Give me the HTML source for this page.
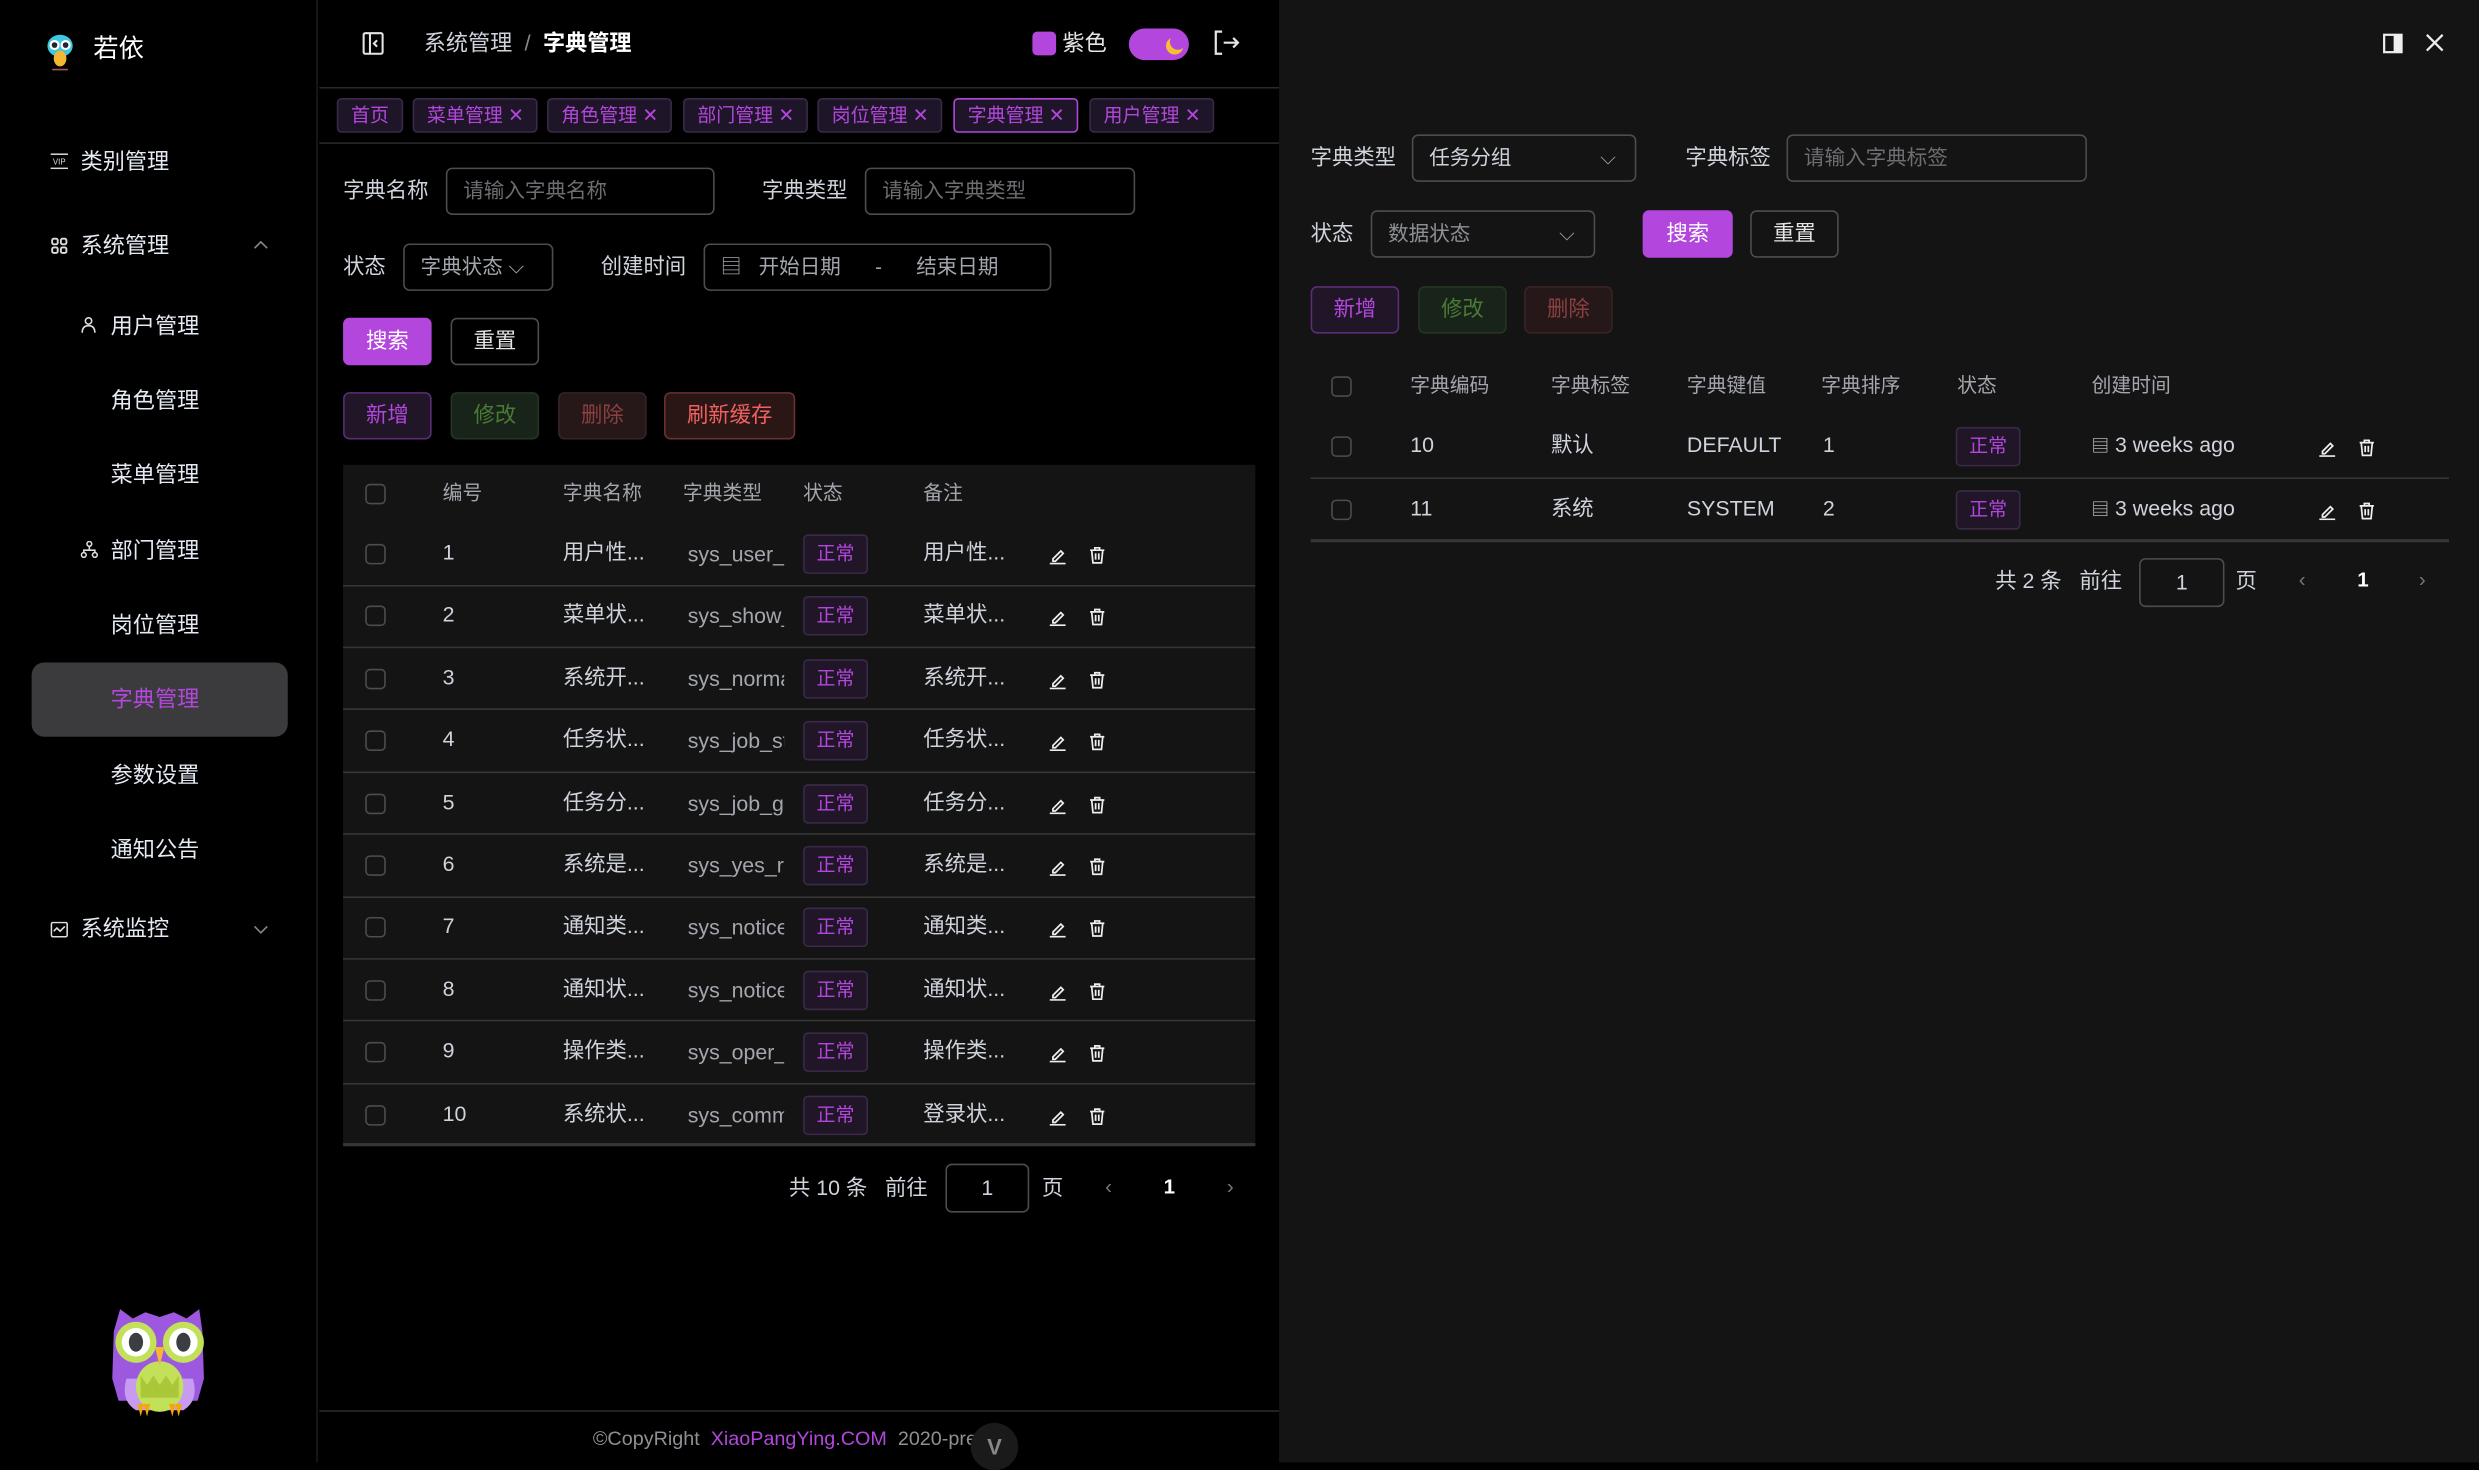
<!DOCTYPE html>
<html><head><meta charset="utf-8">
<style>
*{box-sizing:border-box;margin:0;padding:0}
html,body{width:2479px;height:1463px;overflow:hidden;background:#000}
#w{position:absolute;left:0;top:0;width:1568px;height:925px;transform:scale(1.581);transform-origin:0 0;font-family:"Liberation Sans","Noto Sans CJK SC",sans-serif;font-size:13px;line-height:18px;color:#cfd3dc}
.a{position:absolute;white-space:nowrap}
.side{left:0;top:0;width:201px;height:925px;background:#000;border-right:1px solid #1f1f1f;border-radius:8px 0 0 8px}
.mi{font-size:14px;color:#e5eaf3}
.inp{border:1px solid #4c4d4f;border-radius:4px;height:30px;color:#6c6e72;font-size:13px;line-height:28px;padding-left:10px}
.lbl{font-size:13.5px;color:#cfd3dc}
.btn{border-radius:4px;height:30px;line-height:28px;text-align:center;font-size:13.5px;border:1px solid}
.tag{height:22px;line-height:20px;border-radius:3px;border:1px solid #3a2a48;background:#1e1528;color:#b347dd;font-size:12px;padding:0 8px}
.st{width:41px;height:25px;line-height:23px;text-align:center;border-radius:3px;border:1px solid #3a2a48;background:#211628;color:#b347dd;font-size:12px}
.cb{width:13px;height:13px;border:1px solid #4c4d4f;border-radius:3px}
.th{color:#a3a6ad;font-size:12.5px}
.td{color:#cfd3dc;font-size:13.5px}
.line{height:1px;background:#363637}
</style></head><body><div id="w">
<div class="a side"></div>
<svg class="a" style="left:28px;top:20px" width="20" height="26" viewBox="0 0 20 26"><ellipse cx="10" cy="9" rx="8" ry="7" fill="#3ec9e0"/><circle cx="6.5" cy="8.5" r="3.2" fill="#fff"/><circle cx="13.5" cy="8.5" r="3.2" fill="#fff"/><circle cx="6.5" cy="8.5" r="1.8" fill="#223"/><circle cx="13.5" cy="8.5" r="1.8" fill="#223"/><ellipse cx="10" cy="17" rx="4" ry="5" fill="#f5b630"/><path d="M5 24h10" stroke="#a55" stroke-width="1"/></svg>
<div class="a" style="left:59px;top:22px;font-size:16px;color:#fff;line-height:20px">若依</div>
<svg class="a" style="left:32px;top:97px" width="11" height="10" viewBox="0 0 11 10"><rect x="0" y="0" width="11" height="1" fill="#ddd"/><text x="5.5" y="7" font-size="5" fill="#ddd" text-anchor="middle" font-family="Liberation Sans">VIP</text><rect x="0" y="9" width="11" height="1" fill="#ddd"/></svg>
<div class="a mi" style="left:51px;top:93px">类别管理</div>
<svg class="a" style="left:32px;top:150px" width="11" height="11" viewBox="0 0 11 11" fill="none" stroke="#ddd" stroke-width="1.2"><rect x="1" y="1" width="3.5" height="3.5" rx="1"/><rect x="6.5" y="1" width="3.5" height="3.5" rx="1"/><rect x="1" y="6.5" width="3.5" height="3.5" rx="1"/><rect x="6.5" y="6.5" width="3.5" height="3.5" rx="1"/></svg>
<div class="a mi" style="left:51px;top:146px">系统管理</div>
<svg class="a" style="left:160px;top:152px" width="10" height="6" viewBox="0 0 10 6"><path d="M1 5l4-4 4 4" stroke="#888" fill="none"/></svg>
<svg class="a" style="left:51px;top:200px" width="10" height="11" viewBox="0 0 10 11" fill="none" stroke="#ddd"><circle cx="5" cy="3" r="2"/><path d="M1 10.5c0-3 1.5-4.5 4-4.5s4 1.5 4 4.5"/></svg>
<div class="a mi" style="left:70px;top:197px">用户管理</div>
<div class="a mi" style="left:70px;top:244px">角色管理</div>
<div class="a mi" style="left:70px;top:291px">菜单管理</div>
<svg class="a" style="left:51px;top:342px" width="11" height="11" viewBox="0 0 11 11" fill="none" stroke="#ddd"><circle cx="5.5" cy="2" r="1.5"/><circle cx="2" cy="9" r="1.5"/><circle cx="9" cy="9" r="1.5"/><path d="M5.5 3.5v2.5M2 7.5V6h7v1.5"/></svg>
<div class="a mi" style="left:70px;top:339px">部门管理</div>
<div class="a mi" style="left:70px;top:386px">岗位管理</div>
<div class="a" style="left:20px;top:419px;width:162px;height:47px;background:#3b3b3d;border-radius:8px"></div>
<div class="a mi" style="left:70px;top:433px;color:#b347dd">字典管理</div>
<div class="a mi" style="left:70px;top:481px">参数设置</div>
<div class="a mi" style="left:70px;top:528px">通知公告</div>
<svg class="a" style="left:32px;top:583px" width="11" height="10" viewBox="0 0 11 10" fill="none" stroke="#ddd"><rect x="0.5" y="0.5" width="10" height="9" rx="1"/><path d="M2 6l2-2 2 2 3-3"/></svg>
<div class="a mi" style="left:51px;top:578px">系统监控</div>
<svg class="a" style="left:160px;top:585px" width="10" height="6" viewBox="0 0 10 6"><path d="M1 1l4 4 4-4" stroke="#888" fill="none"/></svg>
<!-- owl -->
<svg class="a" style="left:62px;top:822px" width="78" height="76" viewBox="0 0 78 76"><path d="M14 6l8 6 8-4 9 3 9-3 8 4 8-6 2 14 1 30-4 14-50 0-4-14 1-30z" fill="#9d58e0"/><path d="M18 50q-4 14 6 20h30q10-6 6-20z" fill="#c79bf0"/><ellipse cx="39" cy="55" rx="15" ry="16" fill="#c3e05a"/><path d="M27 48l4 6 4-6 4 6 4-6 4 6 4-6v14H27z" fill="#9fbb2b" opacity=".7"/><circle cx="24" cy="27" r="13" fill="#c3e05a"/><circle cx="54" cy="27" r="13" fill="#c3e05a"/><circle cx="24" cy="27" r="9" fill="#fff"/><circle cx="54" cy="27" r="9" fill="#fff"/><ellipse cx="24" cy="27" rx="4.5" ry="6" fill="#3a3d42"/><ellipse cx="54" cy="27" rx="4.5" ry="6" fill="#3a3d42"/><path d="M36 30h6l-3 12z" fill="#f5b630"/><path d="M25 66l2 8 2-8 2 8 2-8zM45 66l2 8 2-8 2 8 2-8z" fill="#f5a800"/></svg>
<!-- main header -->
<div class="a" style="left:202px;top:55px;width:607px"><div class="line" style="background:#2a2a2a"></div></div>
<div class="a" style="left:202px;top:90px;width:607px"><div class="line" style="background:#2a2a2a"></div></div>
<svg class="a" style="left:229px;top:20px" width="14" height="15" viewBox="0 0 14 15" fill="none" stroke="#e5e5e5" stroke-width="1.3"><rect x="1" y="1" width="12" height="13" rx="1"/><path d="M5 1v13M9.5 5.5l-2 2 2 2"/></svg>
<div class="a" style="left:268px;top:18px;font-size:14px;color:#cfd3dc">系统管理 &nbsp;<span style="color:#888">/</span>&nbsp; <b style="color:#fff">字典管理</b></div>
<div class="a" style="left:653px;top:20px;width:15px;height:15px;border-radius:3px;background:#b347dd"></div>
<div class="a" style="left:672px;top:18px;font-size:14px;color:#e5e5e5">紫色</div>
<div class="a" style="left:714px;top:18px;width:38px;height:20px;border-radius:10px;background:#b347dd"></div>
<svg class="a" style="left:735px;top:20px" width="16" height="16" viewBox="0 0 16 16"><circle cx="8" cy="9" r="5.5" fill="#f5c033"/><circle cx="10" cy="6.5" r="5" fill="#b347dd"/></svg>
<svg class="a" style="left:767px;top:19px" width="17" height="16" viewBox="0 0 17 16" fill="none" stroke="#e5e5e5" stroke-width="1.4"><path d="M6 1H2v14h4M7 8h9M13 5l3 3-3 3"/></svg>
<!-- tags -->
<div class="a tag" style="left:213px;top:62px">首页</div>
<div class="a tag" style="left:261px;top:62px">菜单管理 ✕</div>
<div class="a tag" style="left:346px;top:62px">角色管理 ✕</div>
<div class="a tag" style="left:432px;top:62px">部门管理 ✕</div>
<div class="a tag" style="left:517px;top:62px">岗位管理 ✕</div>
<div class="a tag" style="left:603px;top:62px;border-color:#b347dd">字典管理 ✕</div>
<div class="a tag" style="left:689px;top:62px">用户管理 ✕</div>
<!-- form -->
<div class="a lbl" style="left:217px;top:112px">字典名称</div>
<div class="a inp" style="left:282px;top:106px;width:170px">请输入字典名称</div>
<div class="a lbl" style="left:482px;top:112px">字典类型</div>
<div class="a inp" style="left:547px;top:106px;width:171px">请输入字典类型</div>
<div class="a lbl" style="left:217px;top:160px">状态</div>
<div class="a inp" style="left:255px;top:154px;width:95px;color:#a3a6ad">字典状态 ⌵</div>
<div class="a lbl" style="left:380px;top:160px">创建时间</div>
<div class="a inp" style="left:445px;top:154px;width:220px;color:#a3a6ad">▤ &nbsp; 开始日期 &nbsp;&nbsp;&nbsp;&nbsp; - &nbsp;&nbsp;&nbsp;&nbsp; 结束日期</div>
<div class="a btn" style="left:217px;top:201px;width:56px;background:#b347dd;border-color:#b347dd;color:#fff">搜索</div>
<div class="a btn" style="left:285px;top:201px;width:56px;border-color:#4c4d4f;color:#e5e5e5">重置</div>
<div class="a btn" style="left:217px;top:248px;width:56px;background:#211628;border-color:#5b2d78;color:#b347dd">新增</div>
<div class="a btn" style="left:285px;top:248px;width:56px;background:#18241a;border-color:#23361f;color:#4b7a35">修改</div>
<div class="a btn" style="left:353px;top:248px;width:56px;background:#261818;border-color:#3a2323;color:#8a4040">删除</div>
<div class="a btn" style="left:420px;top:248px;width:83px;background:#2b1616;border-color:#6a3030;color:#f06060">刷新缓存</div>
<!-- left table -->
<div class="a" style="left:217px;top:294px;width:577px;height:431px;background:#141414"></div>
<div class="a" style="left:217px;top:723px;width:577px;height:2px;background:#363637"></div>
<div class="a cb" style="left:231px;top:306px"></div>
<div class="a th" style="left:280px;top:303px">编号</div><div class="a th" style="left:356px;top:303px">字典名称</div><div class="a th" style="left:432px;top:303px">字典类型</div><div class="a th" style="left:508px;top:303px">状态</div><div class="a th" style="left:584px;top:303px">备注</div>
<div id="lrows"></div>
<div class="a td" style="left:499px;top:743px">共 10 条 &nbsp; 前往</div>
<div class="a" style="left:598px;top:736px;width:53px;height:31px;border:1px solid #4c4d4f;border-radius:4px;text-align:center;line-height:29px;font-size:13.5px">1</div>
<div class="a td" style="left:659px;top:743px">页</div>
<div class="a" style="left:699px;top:742px;color:#777">‹</div>
<div class="a" style="left:736px;top:742px;color:#fff;font-weight:bold">1</div>
<div class="a" style="left:776px;top:742px;color:#777">›</div>
<!-- footer -->
<div class="a" style="left:202px;top:892px;width:607px"><div class="line" style="background:#2a2a2a"></div></div>
<div class="a" style="left:375px;top:901px;font-size:12.5px;color:#8d9095">©CopyRight &nbsp;<span style="color:#b347dd">XiaoPangYing.COM</span> &nbsp;2020-pres</div>
<div class="a" style="left:614px;top:900px;width:30px;height:30px;border-radius:15px;background:#1a1a1a;color:#888;text-align:center;font-weight:bold;font-size:14px;line-height:30px">V</div>
<!-- right panel -->
<div class="a" style="left:809px;top:0;width:759px;height:925px;background:#141414"></div>
<svg class="a" style="left:1507px;top:21px" width="13" height="13" viewBox="0 0 13 13"><rect x="1" y="1" width="11" height="11" fill="none" stroke="#eee" stroke-width="1.4"/><rect x="7" y="1" width="5" height="11" fill="#eee"/></svg>
<svg class="a" style="left:1534px;top:21px" width="12" height="12" viewBox="0 0 12 12"><path d="M1 1l10 10M11 1L1 11" stroke="#eee" stroke-width="1.4"/></svg>
<div class="a lbl" style="left:829px;top:91px">字典类型</div>
<div class="a inp" style="left:893px;top:85px;width:142px;color:#cfd3dc">任务分组<span style="position:absolute;right:12px;color:#999">⌵</span></div>
<div class="a lbl" style="left:1066px;top:91px">字典标签</div>
<div class="a inp" style="left:1130px;top:85px;width:190px">请输入字典标签</div>
<div class="a lbl" style="left:829px;top:139px">状态</div>
<div class="a inp" style="left:867px;top:133px;width:142px;color:#8d9095">数据状态<span style="position:absolute;right:12px;color:#999">⌵</span></div>
<div class="a btn" style="left:1039px;top:133px;width:57px;background:#b347dd;border-color:#b347dd;color:#fff">搜索</div>
<div class="a btn" style="left:1107px;top:133px;width:56px;border-color:#4c4d4f;color:#e5e5e5">重置</div>
<div class="a btn" style="left:829px;top:181px;width:56px;background:#211628;border-color:#5b2d78;color:#b347dd">新增</div>
<div class="a btn" style="left:897px;top:181px;width:56px;background:#18241a;border-color:#23361f;color:#4b7a35">修改</div>
<div class="a btn" style="left:964px;top:181px;width:56px;background:#261818;border-color:#3a2323;color:#8a4040">删除</div>
<div class="a cb" style="left:842px;top:238px"></div>
<div class="a th" style="left:892px;top:235px">字典编码</div><div class="a th" style="left:981px;top:235px">字典标签</div><div class="a th" style="left:1067px;top:235px">字典键值</div><div class="a th" style="left:1152px;top:235px">字典排序</div><div class="a th" style="left:1238px;top:235px">状态</div><div class="a th" style="left:1323px;top:235px">创建时间</div>
<div id="rrows"></div>
<div class="a td" style="left:1262px;top:359px">共 2 条 &nbsp; 前往</div>
<div class="a" style="left:1353px;top:353px;width:54px;height:31px;border:1px solid #4c4d4f;border-radius:4px;text-align:center;line-height:29px;font-size:13.5px">1</div>
<div class="a td" style="left:1414px;top:359px">页</div>
<div class="a" style="left:1454px;top:358px;color:#777">‹</div>
<div class="a" style="left:1491px;top:358px;color:#fff;font-weight:bold">1</div>
<div class="a" style="left:1530px;top:358px;color:#777">›</div>
</div>
<script>
var ed='<svg width="12" height="12" viewBox="0 0 12 12" fill="none" stroke="#eee" stroke-width="1.1"><path d="M3 8.5l5-5 1.5 1.5-5 5H3z"/><path d="M1 11.5h10"/></svg>';
var tr='<svg width="12" height="12" viewBox="0 0 12 12" fill="none" stroke="#eee" stroke-width="1.1"><path d="M1.5 3h9M4.5 3V1.5h3V3M2.5 3l.8 8h5.4l.8-8M5 5v4M7 5v4"/></svg>';
var L=[["1","用户性...","sys_user_","用户性..."],["2","菜单状...","sys_show_","菜单状..."],["3","系统开...","sys_norma","系统开..."],["4","任务状...","sys_job_st","任务状..."],["5","任务分...","sys_job_g","任务分..."],["6","系统是...","sys_yes_r","系统是..."],["7","通知类...","sys_notice","通知类..."],["8","通知状...","sys_notice","通知状..."],["9","操作类...","sys_oper_","操作类..."],["10","系统状...","sys_comm","登录状..."]];
var h='';
L.forEach(function(r,i){var c=350+i*39.4;
h+='<div class="a cb" style="left:231px;top:'+(c-6)+'px"></div>';
h+='<div class="a td" style="left:280px;top:'+(c-9)+'px">'+r[0]+'</div>';
h+='<div class="a td" style="left:356px;top:'+(c-9)+'px">'+r[1]+'</div>';
h+='<div class="a td" style="left:435px;top:'+(c-8)+'px;width:61px;overflow:hidden;color:#a3a6ad">'+r[2]+'</div>';
h+='<div class="a st" style="left:508px;top:'+(c-12)+'px">正常</div>';
h+='<div class="a td" style="left:584px;top:'+(c-9)+'px">'+r[3]+'</div>';
h+='<div class="a" style="left:663px;top:'+(c-6)+'px">'+ed+'</div><div class="a" style="left:688px;top:'+(c-6)+'px">'+tr+'</div>';
if(i<9)h+='<div class="a line" style="left:217px;width:577px;top:'+(c+19.5)+'px"></div>';});
document.getElementById('lrows').outerHTML=h;
var R=[["10","默认","DEFAULT","1"],["11","系统","SYSTEM","2"]];h='';
R.forEach(function(r,i){var c=282+i*39.5;
h+='<div class="a cb" style="left:842px;top:'+(c-6)+'px"></div>';
h+='<div class="a td" style="left:892px;top:'+(c-9)+'px">'+r[0]+'</div>';
h+='<div class="a td" style="left:981px;top:'+(c-9)+'px">'+r[1]+'</div>';
h+='<div class="a td" style="left:1067px;top:'+(c-9)+'px">'+r[2]+'</div>';
h+='<div class="a td" style="left:1153px;top:'+(c-9)+'px">'+r[3]+'</div>';
h+='<div class="a st" style="left:1237px;top:'+(c-12)+'px">正常</div>';
h+='<div class="a td" style="left:1323px;top:'+(c-9)+'px"><span style="font-size:11px">▤</span> 3 weeks ago</div>';
h+='<div class="a" style="left:1466px;top:'+(c-6)+'px">'+ed+'</div><div class="a" style="left:1491px;top:'+(c-6)+'px">'+tr+'</div>';
h+='<div class="a line" style="left:829px;width:720px;top:'+(c+19.5)+'px;'+(i==1?'height:2px':'')+'"></div>';});
document.getElementById('rrows').outerHTML=h;
</script>
</body></html>
